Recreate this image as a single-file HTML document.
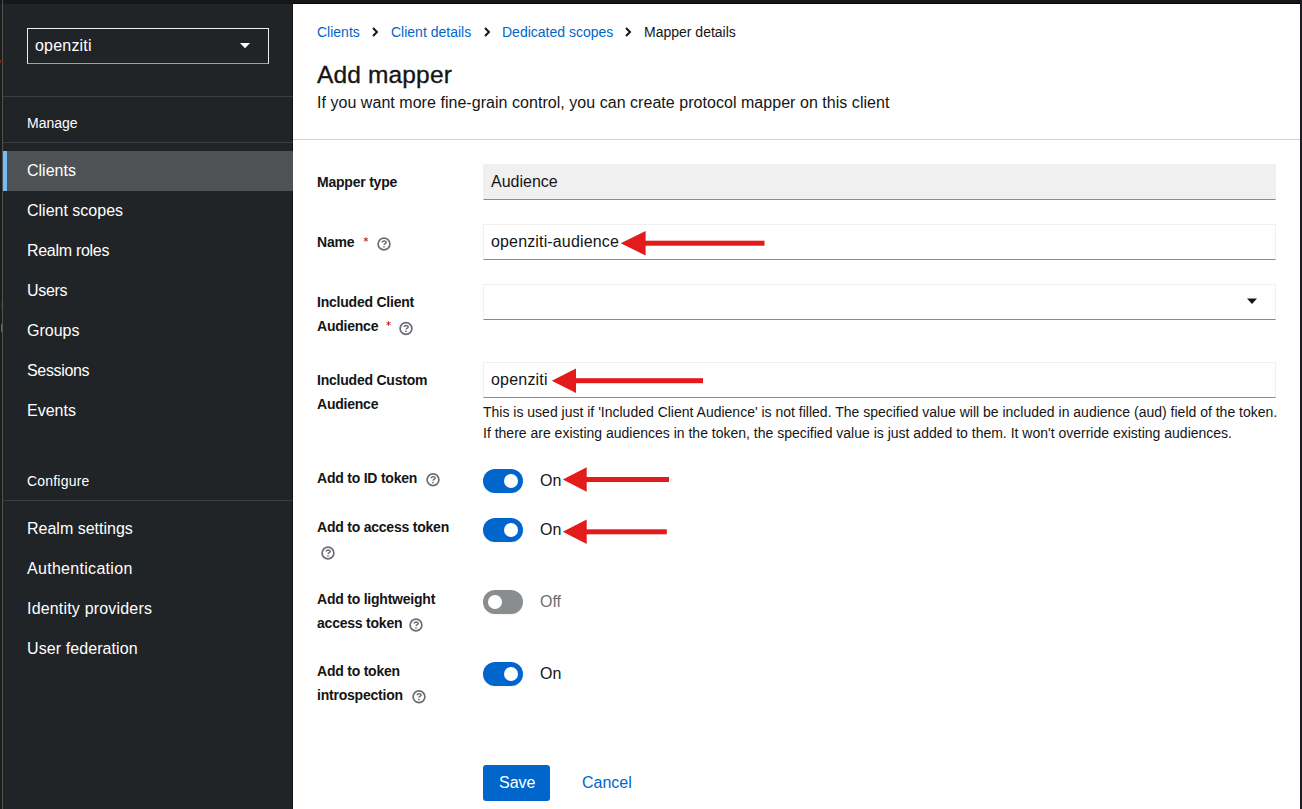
<!DOCTYPE html>
<html><head><meta charset="utf-8">
<style>
*{margin:0;padding:0;box-sizing:border-box}
html,body{width:1302px;height:809px;overflow:hidden;background:#1b1c1d;font-family:"Liberation Sans",sans-serif}
.a{position:absolute;white-space:nowrap}
#top{position:absolute;left:0;top:0;width:1302px;height:4px;background:#161616}
#top2{position:absolute;left:293px;top:3px;width:1007px;height:1px;background:#040404}
#ledge{position:absolute;left:2px;top:0;width:1px;height:809px;background:#55524e}
#side{position:absolute;left:3px;top:4px;width:289px;height:805px;background:#212427}
#sideline{position:absolute;left:292px;top:4px;width:1px;height:805px;background:#131619}
#main{position:absolute;left:293px;top:4px;width:1007px;height:805px;background:#fff}
#redge{position:absolute;left:1300px;top:0;width:2px;height:809px;background:#1a1c1f}
.sep{position:absolute;left:3px;width:290px;height:1px;background:#3c3f42}
.nav{position:absolute;left:27px;font-size:16px;line-height:20px;color:#fff}
.sec{position:absolute;left:27px;font-size:14px;line-height:20px;color:#fff}
.lbl{position:absolute;left:317px;font-size:14px;font-weight:bold;line-height:24px;color:#151515;letter-spacing:-0.22px}
.ast{position:absolute;font-size:14px;line-height:20px;color:#c9190b}
.inp{position:absolute;left:483px;width:793px;height:36px;border:1px solid #f0f0f0;border-bottom-color:#8a8d90;background:#fff}
.itxt{position:absolute;font-size:16px;line-height:20px;color:#151515}
.req{color:#c9190b;font-weight:normal;font-size:14px}
.help{position:absolute;width:14px;height:14px}
.tog{position:absolute;left:483px;width:40px;height:24px;border-radius:12px;background:#06c;box-shadow:0 1px 2px rgba(0,0,0,.05)}
.tog::after{content:"";position:absolute;top:5px;left:21px;width:14px;height:14px;border-radius:50%;background:#fff}
.tog.off{background:#8a8d90}
.tog.off::after{left:5px}
.arrow{position:absolute}
</style></head><body>
<div id="top"></div><div id="top2"></div>
<div id="side"></div>
<div id="ledge"></div>
<div id="sideline"></div>
<div id="main"></div>
<div id="redge"></div><div class="a" style="left:1px;top:324px;width:1px;height:8px;background:#3b6fb5"></div><div class="a" style="left:1px;top:300px;width:1px;height:10px;background:#25284a"></div><div class="a" style="left:0;top:60px;width:1px;height:3px;background:#7a3020"></div>

<!-- sidebar -->
<div class="a" style="left:27px;top:28px;width:242px;height:36px;border:1px solid #f0f0f0;border-bottom-color:#9fa2a5"></div>
<div class="a nav" style="left:35px;top:36px;letter-spacing:0.2px">openziti</div>
<svg class="a" style="left:240px;top:43px" width="11" height="7" viewBox="0 0 11 7"><path d="M0 0H10L5 5.3Z" fill="#fff"/></svg>
<div class="sep" style="top:96px"></div>
<div class="a sec" style="top:113px">Manage</div>
<div class="sep" style="top:142px"></div>
<div class="a" style="left:3px;top:151px;width:290px;height:40px;background:#4f5255"></div>
<div class="a" style="left:3px;top:151px;width:4px;height:40px;background:#73bcf7"></div>
<div class="a nav" style="top:161px">Clients</div>
<div class="a nav" style="top:201px">Client scopes</div>
<div class="a nav" style="top:241px;letter-spacing:-0.29px">Realm roles</div>
<div class="a nav" style="top:281px;letter-spacing:-0.3px">Users</div>
<div class="a nav" style="top:321px">Groups</div>
<div class="a nav" style="top:361px;letter-spacing:-0.34px">Sessions</div>
<div class="a nav" style="top:401px">Events</div>
<div class="a sec" style="top:471px;letter-spacing:0.2px">Configure</div>
<div class="sep" style="top:500px"></div>
<div class="a nav" style="top:519px">Realm settings</div>
<div class="a nav" style="top:559px;letter-spacing:0.3px">Authentication</div>
<div class="a nav" style="top:599px;letter-spacing:0.18px">Identity providers</div>
<div class="a nav" style="top:639px;letter-spacing:0.09px">User federation</div>

<!-- main -->
<div class="a" style="left:317px;top:22px;font-size:14px;line-height:20px;color:#06c">Clients</div>
<div class="a" style="left:391px;top:22px;font-size:14px;line-height:20px;color:#06c">Client details</div>
<div class="a" style="left:502px;top:22px;font-size:14px;line-height:20px;color:#06c">Dedicated scopes</div>
<div class="a" style="left:644px;top:22px;font-size:14px;line-height:20px;color:#151515">Mapper details</div>
<div class="a" style="left:317px;top:60px;font-size:24.5px;line-height:30px;color:#151515;letter-spacing:0.15px;-webkit-text-stroke:0.35px #151515">Add mapper</div>
<div class="a" style="left:317px;top:93px;font-size:16px;line-height:20px;color:#151515;letter-spacing:0.04px">If you want more fine-grain control, you can create protocol mapper on this client</div>
<div class="a" style="left:293px;top:139px;width:1007px;height:1px;background:#d2d2d2"></div>

<div class="a lbl" style="top:170px">Mapper type</div>
<div class="inp" style="top:164px;background:#f0f0f0;border-color:#f0f0f0;border-bottom-color:#8a8d90"></div>
<div class="a itxt" style="left:491px;top:172px">Audience</div>

<div class="a lbl" style="top:230px">Name</div>
<div class="inp" style="top:224px"></div>
<div class="a itxt" style="left:491px;top:232px;letter-spacing:0.15px">openziti-audience</div>

<div class="a lbl" style="top:290px">Included Client</div>
<div class="a lbl" style="top:314px">Audience</div>
<div class="inp" style="top:284px"></div>

<div class="a lbl" style="top:368px">Included Custom</div>
<div class="a lbl" style="top:392px">Audience</div>
<div class="inp" style="top:362px"></div>
<div class="a itxt" style="left:491px;top:370px;letter-spacing:0.2px">openziti</div>
<div class="a" style="left:483px;top:402px;font-size:14px;line-height:21px;color:#151515">This is used just if 'Included Client Audience' is not filled. The specified value will be included in audience (aud) field of the token.</div>
<div class="a" style="left:483px;top:423px;font-size:14px;line-height:21px;color:#151515">If there are existing audiences in the token, the specified value is just added to them. It won't override existing audiences.</div>

<div class="a lbl" style="top:466px">Add to ID token</div>
<div class="tog" style="top:469px"></div>
<div class="a itxt" style="left:540px;top:471px">On</div>

<div class="a lbl" style="top:515px">Add to access token</div>
<div class="tog" style="top:518px"></div>
<div class="a itxt" style="left:540px;top:520px">On</div>

<div class="a lbl" style="top:587px">Add to lightweight</div>
<div class="a lbl" style="top:611px">access token</div>
<div class="tog off" style="top:590px"></div>
<div class="a itxt" style="left:540px;top:592px;color:#6a6e73">Off</div>

<div class="a lbl" style="top:659px">Add to token</div>
<div class="a lbl" style="top:683px">introspection</div>
<div class="tog" style="top:662px"></div>
<div class="a itxt" style="left:540px;top:664px">On</div>

<div class="a" style="left:483px;top:765px;width:67px;height:36px;border-radius:3px;background:#06c"></div>
<div class="a itxt" style="left:499px;top:773px;color:#fff">Save</div>
<div class="a itxt" style="left:582px;top:773px;color:#06c">Cancel</div>
<svg class="a" style="left:0;top:0" width="1302" height="809" viewBox="0 0 1302 809"><path d="M373 28L377 32L373 36" fill="none" stroke="#151515" stroke-width="2"/><path d="M485 28L489 32L485 36" fill="none" stroke="#151515" stroke-width="2"/><path d="M626 28L630 32L626 36" fill="none" stroke="#151515" stroke-width="2"/><g transform="translate(384 244)"><circle r="5.9" fill="none" stroke="#6a6e73" stroke-width="1.7"/><path d="M-1.8 -1.4C-1.8 -3.5 2.2 -3.6 2.2 -1.6C2.2 -0.4 0 -0.5 0 1.0" fill="none" stroke="#6a6e73" stroke-width="1.45"/><rect x="-0.85" y="2.25" width="1.7" height="1.25" fill="#6a6e73"/></g><g transform="translate(406 328.5)"><circle r="5.9" fill="none" stroke="#6a6e73" stroke-width="1.7"/><path d="M-1.8 -1.4C-1.8 -3.5 2.2 -3.6 2.2 -1.6C2.2 -0.4 0 -0.5 0 1.0" fill="none" stroke="#6a6e73" stroke-width="1.45"/><rect x="-0.85" y="2.25" width="1.7" height="1.25" fill="#6a6e73"/></g><g transform="translate(433 479.7)"><circle r="5.9" fill="none" stroke="#6a6e73" stroke-width="1.7"/><path d="M-1.8 -1.4C-1.8 -3.5 2.2 -3.6 2.2 -1.6C2.2 -0.4 0 -0.5 0 1.0" fill="none" stroke="#6a6e73" stroke-width="1.45"/><rect x="-0.85" y="2.25" width="1.7" height="1.25" fill="#6a6e73"/></g><g transform="translate(328 553)"><circle r="5.9" fill="none" stroke="#6a6e73" stroke-width="1.7"/><path d="M-1.8 -1.4C-1.8 -3.5 2.2 -3.6 2.2 -1.6C2.2 -0.4 0 -0.5 0 1.0" fill="none" stroke="#6a6e73" stroke-width="1.45"/><rect x="-0.85" y="2.25" width="1.7" height="1.25" fill="#6a6e73"/></g><g transform="translate(416 625)"><circle r="5.9" fill="none" stroke="#6a6e73" stroke-width="1.7"/><path d="M-1.8 -1.4C-1.8 -3.5 2.2 -3.6 2.2 -1.6C2.2 -0.4 0 -0.5 0 1.0" fill="none" stroke="#6a6e73" stroke-width="1.45"/><rect x="-0.85" y="2.25" width="1.7" height="1.25" fill="#6a6e73"/></g><g transform="translate(419 696.7)"><circle r="5.9" fill="none" stroke="#6a6e73" stroke-width="1.7"/><path d="M-1.8 -1.4C-1.8 -3.5 2.2 -3.6 2.2 -1.6C2.2 -0.4 0 -0.5 0 1.0" fill="none" stroke="#6a6e73" stroke-width="1.45"/><rect x="-0.85" y="2.25" width="1.7" height="1.25" fill="#6a6e73"/></g><path d="M1247 298.5H1257L1252 304Z" fill="#151515"/><polygon points="620.7,243.2 645.6,231.0 645.6,255.39999999999998" fill="#e31b1b"/><rect x="644.6" y="240.7" width="119.89999999999998" height="5" fill="#e31b1b"/><polygon points="551.8,380.7 576,368.5 576,392.9" fill="#e31b1b"/><rect x="575" y="378.2" width="128" height="5" fill="#e31b1b"/><polygon points="562.8,479.5 586.7,467.3 586.7,491.7" fill="#e31b1b"/><rect x="585.7" y="477.0" width="83.29999999999995" height="5" fill="#e31b1b"/><polygon points="562.8,531.8 586.7,519.5999999999999 586.7,544.0" fill="#e31b1b"/><rect x="585.7" y="529.3" width="81.09999999999991" height="5" fill="#e31b1b"/><path d="M365.9 237.3V241.7M363.9 238.4L367.9 240.6M367.9 238.4L363.9 240.6" stroke="#c9190b" stroke-width="0.9" fill="none"/><path d="M388.5 321.3V325.7M386.5 322.4L390.5 324.6M390.5 322.4L386.5 324.6" stroke="#c9190b" stroke-width="0.9" fill="none"/></svg>
</body></html>
